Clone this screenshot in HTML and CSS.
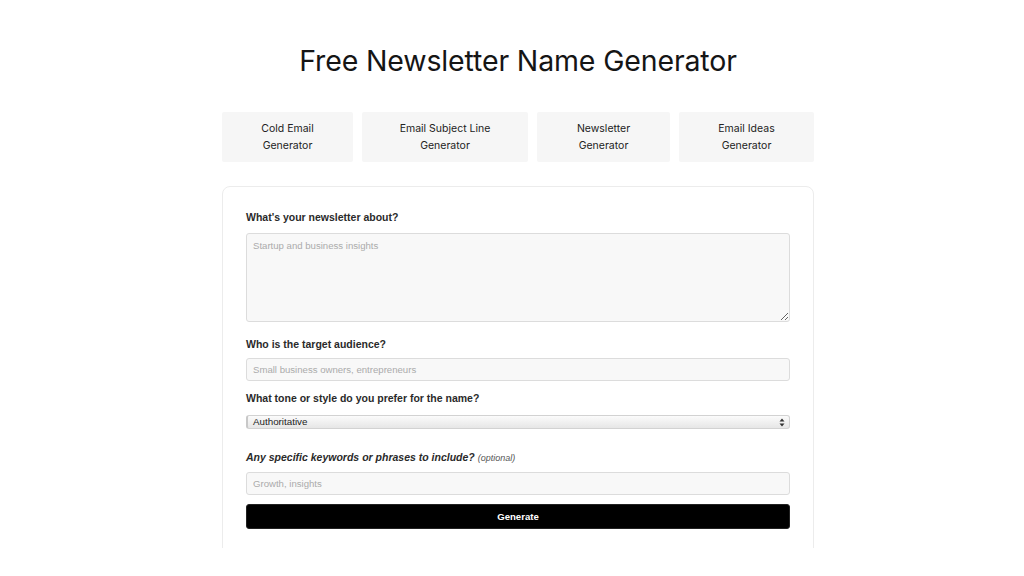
FILE: index.html
```html
<!DOCTYPE html>
<html lang="en">
<head>
<meta charset="utf-8">
<title>Free Newsletter Name Generator</title>
<link rel="stylesheet" href="styles.css">
</head>
<body>
<div class="clip">
  <div class="page">
    <h1 class="title">Free Newsletter Name Generator</h1>
    <nav class="tabs">
      <a class="tab">Cold Email<br>Generator</a>
      <a class="tab">Email Subject Line<br>Generator</a>
      <a class="tab">Newsletter<br>Generator</a>
      <a class="tab">Email Ideas<br>Generator</a>
    </nav>
    <form class="card">
      <label class="label l1">What's your newsletter about?</label>
      <textarea class="area" placeholder="Startup and business insights"></textarea>
      <label class="label l2">Who is the target audience?</label>
      <input class="field" type="text" placeholder="Small business owners, entrepreneurs">
      <label class="label l3">What tone or style do you prefer for the name?</label>
      <div class="select">
        <span class="select-text">Authoritative</span>
        <svg class="select-arrow" width="6" height="9" viewBox="0 0 6 9"><path d="M3 0.5 L5.5 3.5 H0.5 Z M3 8.5 L5.5 5.5 H0.5 Z" fill="#333"/></svg>
      </div>
      <label class="label l4"><em>Any specific keywords or phrases to include?</em> <span class="opt">(optional)</span></label>
      <input class="field" type="text" placeholder="Growth, insights">
      <button class="btn" type="button">Generate</button>
    </form>
  </div>
</div>
</body>
</html>
```

FILE: styles.css
```css
html, body {
  margin: 0;
  padding: 0;
  background: #ffffff;
}

body {
  padding-left: 12px;
  font-family: "Liberation Sans", Arial, sans-serif;
  color: #222;
}

.clip {
  height: 548px;
  overflow: hidden;
}

.page {
  width: 592px;
  margin: 0 auto;
}

.title {
  margin: 43px -60px 0;
  font-family: Inter, "Noto Sans", sans-serif;
  font-weight: 400;
  font-size: 28.5px;
  line-height: 36px;
  text-align: center;
  color: #151515;
  letter-spacing: -0.15px;
}

.tabs {
  display: grid;
  grid-template-columns: 131px 166px 133px 135px;
  column-gap: 9px;
  margin-top: 33px;
}

.tab {
  display: flex;
  align-items: center;
  justify-content: center;
  height: 50px;
  background: #f6f6f6;
  border-radius: 2px;
  font-family: Inter, "Noto Sans", sans-serif;
  font-size: 10.5px;
  line-height: 17px;
  text-align: center;
  color: #222;
}

.card {
  display: flex;
  flex-direction: column;
  margin-top: 24px;
  border: 1px solid #ececec;
  border-radius: 8px;
  padding: 24px 23px 60px 23px;
  box-sizing: border-box;
}

.label {
  display: block;
  font-size: 10.5px;
  line-height: 12px;
  font-weight: 700;
  color: #2a2a2a;
}

.l1 { margin-bottom: 10px; }
.l2 { margin-top: 16px; margin-bottom: 8px; }
.l3 { margin-top: 11px; margin-bottom: 11px; }
.l4 { margin-top: 22px; margin-bottom: 8px; }

.l4 em {
  font-style: italic;
}

.opt {
  font-weight: 400;
  font-style: italic;
  font-size: 9px;
  color: #555;
}

.area,
.field {
  box-sizing: border-box;
  width: 100%;
  margin: 0;
  background: #f8f8f8;
  border: 1px solid #dcdcdc;
  border-radius: 3px;
  font-family: "Liberation Sans", Arial, sans-serif;
  font-size: 9.6px;
  color: #222;
  outline: none;
}

.area {
  height: 89px;
  padding: 6px 6px;
  resize: vertical;
}

.field {
  height: 23px;
  padding: 0 6px;
}

.area::placeholder,
.field::placeholder {
  color: #ababab;
}

.select {
  box-sizing: border-box;
  display: flex;
  align-items: center;
  justify-content: space-between;
  height: 14px;
  padding: 0 4px 0 5px;
  border: 1px solid #d2d2d2;
  border-left: 2px solid #c8c8c8;
  border-radius: 3px;
  background: linear-gradient(#fbfbfb, #e6e6e6);
  font-size: 9.8px;
  line-height: 12px;
  color: #222;
}

.select-arrow {
  display: block;
}

.btn {
  margin-top: 9px;
  height: 25px;
  border: 1px solid #222;
  border-radius: 3px;
  background: #000;
  color: #fff;
  font-family: "Liberation Sans", Arial, sans-serif;
  font-weight: 700;
  font-size: 9.6px;
  padding: 0;
}
```
